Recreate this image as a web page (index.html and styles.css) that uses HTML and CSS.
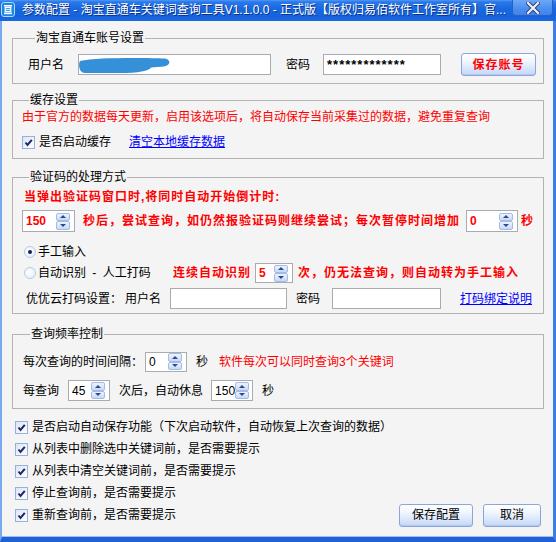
FILE: index.html
```html
<!DOCTYPE html>
<html lang="zh-CN">
<head>
<meta charset="utf-8">
<title>参数配置</title>
<link rel="stylesheet" href="styles.css">
</head>
<body>
<div class="window">
  <div class="titlebar">
    <svg class="app-icon" width="14" height="15" viewBox="0 0 14 15">
      <rect x="0.5" y="0.5" width="13" height="14" rx="2.5" fill="#1c86e6" stroke="#a9dbff"/>
      <rect x="3" y="3" width="8" height="1.6" fill="#fff"/>
      <rect x="3" y="10.6" width="8" height="1.6" fill="#fff"/>
      <rect x="4.2" y="5.6" width="5.6" height="4" fill="none" stroke="#fff" stroke-width="1.2"/>
      <rect x="4.2" y="7.2" width="5.6" height="1" fill="#fff"/>
    </svg>
    <span class="title">参数配置 - 淘宝直通车关键词查询工具V1.1.0.0 - 正式版【版权归易佰软件工作室所有】官...</span>
    <div class="close-btn">
      <svg width="14" height="12" viewBox="0 0 14 12">
        <path d="M2 1 L12 11 M12 1 L2 11" stroke="#2c3f78" stroke-width="4.2" stroke-linecap="square"/>
        <path d="M2 1 L12 11 M12 1 L2 11" stroke="#eef1f7" stroke-width="2.2" stroke-linecap="square"/>
      </svg>
    </div>
  </div>

  <div class="body">
    <fieldset class="group g-account">
      <legend>淘宝直通车账号设置</legend>
      <div class="row account-row">
        <span class="lbl">用户名</span>
        <div class="input input-user">
          <svg class="redact" width="92" height="17" viewBox="0 0 92 17">
            <path d="M1 4 C18 0 70 1 86 1.5 C92 2.5 92 8.5 85 9.5 L72 10.5 C70 14 60 16 40 16 L6 16 C0 16 -1 7 1 4 Z" fill="#3690d8"/>
          </svg>
        </div>
        <span class="lbl lbl-pass">密码</span>
        <div class="input input-pass">*************</div>
        <button class="btn btn-account">保存账号</button>
      </div>
    </fieldset>

    <fieldset class="group g-cache">
      <legend>缓存设置</legend>
      <div class="red-line cache-note">由于官方的数据每天更新，启用该选项后，将自动保存当前采集过的数据，避免重复查询</div>
      <div class="row check-row cache-row">
        <span class="checkbox checked"><svg width="11" height="11" viewBox="0 0 11 11"><path d="M2.5 5.5 L4.5 8 L8.8 2.8" fill="none" stroke="#21246b" stroke-width="2"/></svg></span>
        <span class="check-label">是否启动缓存</span>
        <a class="link clear-link">清空本地缓存数据</a>
      </div>
    </fieldset>

    <fieldset class="group g-captcha">
      <legend>验证码的处理方式</legend>
      <div class="warn-bold captcha-head">当弹出验证码窗口时,将同时自动开始倒计时:</div>
      <div class="row captcha-spin-row">
        <div class="spin spin-red spin-150"><span class="val">150</span><span class="spin-btns"><i class="up"></i><i class="down"></i></span></div>
        <span class="warn-bold retry-text">秒后，尝试查询，如仍然报验证码则继续尝试；每次暂停时间增加</span>
        <div class="spin spin-red spin-add"><span class="val">0</span><span class="spin-btns"><i class="up"></i><i class="down"></i></span></div>
        <span class="warn-bold sec-bold">秒</span>
      </div>
      <div class="row radio-row radio-manual">
        <span class="radio selected"></span>
        <span class="radio-label">手工输入</span>
      </div>
      <div class="row radio-row radio-auto">
        <span class="radio"></span>
        <span class="radio-label auto-label">自动识别 <span class="dash">-</span> 人工打码</span>
        <span class="warn-bold">连续自动识别</span>
        <div class="spin spin-red spin-5"><span class="val">5</span><span class="spin-btns"><i class="up"></i><i class="down"></i></span></div>
        <span class="warn-bold fallback-text">次，仍无法查询，则自动转为手工输入</span>
      </div>
      <div class="row yyy-row">
        <span class="lbl">优优云打码设置：</span>
        <span class="lbl yyy-user">用户名</span>
        <div class="input yyy-input-user"></div>
        <span class="lbl yyy-pass">密码</span>
        <div class="input yyy-input-pass"></div>
        <a class="link yyy-link">打码绑定说明</a>
      </div>
    </fieldset>

    <fieldset class="group g-freq">
      <legend>查询频率控制</legend>
      <div class="row freq-row freq-row1">
        <span class="lbl">每次查询的时间间隔：</span>
        <div class="spin spin-interval"><span class="val">0</span><span class="spin-btns"><i class="up"></i><i class="down"></i></span></div>
        <span class="lbl sec-a">秒</span>
        <span class="red-line freq-note">软件每次可以同时查询3个关键词</span>
      </div>
      <div class="row freq-row freq-row2">
        <span class="lbl">每查询</span>
        <div class="spin spin-count"><span class="val">45</span><span class="spin-btns"><i class="up"></i><i class="down"></i></span></div>
        <span class="lbl rest-label">次后，自动休息</span>
        <div class="spin spin-rest"><span class="val">150</span><span class="spin-btns"><i class="up"></i><i class="down"></i></span></div>
        <span class="lbl sec-b">秒</span>
      </div>
    </fieldset>

    <div class="checklist">
      <div class="row list-row">
        <span class="checkbox checked"><svg width="11" height="11" viewBox="0 0 11 11"><path d="M2.5 5.5 L4.5 8 L8.8 2.8" fill="none" stroke="#21246b" stroke-width="2"/></svg></span>
        <span class="check-label">是否启动自动保存功能（下次启动软件，自动恢复上次查询的数据）</span>
      </div>
      <div class="row list-row">
        <span class="checkbox checked"><svg width="11" height="11" viewBox="0 0 11 11"><path d="M2.5 5.5 L4.5 8 L8.8 2.8" fill="none" stroke="#21246b" stroke-width="2"/></svg></span>
        <span class="check-label">从列表中删除选中关键词前，是否需要提示</span>
      </div>
      <div class="row list-row">
        <span class="checkbox checked"><svg width="11" height="11" viewBox="0 0 11 11"><path d="M2.5 5.5 L4.5 8 L8.8 2.8" fill="none" stroke="#21246b" stroke-width="2"/></svg></span>
        <span class="check-label">从列表中清空关键词前，是否需要提示</span>
      </div>
      <div class="row list-row">
        <span class="checkbox checked"><svg width="11" height="11" viewBox="0 0 11 11"><path d="M2.5 5.5 L4.5 8 L8.8 2.8" fill="none" stroke="#21246b" stroke-width="2"/></svg></span>
        <span class="check-label">停止查询前，是否需要提示</span>
      </div>
      <div class="row list-row last-row">
        <span class="checkbox checked"><svg width="11" height="11" viewBox="0 0 11 11"><path d="M2.5 5.5 L4.5 8 L8.8 2.8" fill="none" stroke="#21246b" stroke-width="2"/></svg></span>
        <span class="check-label">重新查询前，是否需要提示</span>
        <div class="actions">
          <button class="btn btn-save">保存配置</button>
          <button class="btn btn-cancel">取消</button>
        </div>
      </div>
    </div>
  </div>
</div>
</body>
</html>
```

FILE: styles.css
```css
html, body {
  margin: 0;
  padding: 0;
  background: #f4f4f4;
}

.window {
  width: 556px;
  height: 542px;
  display: flex;
  flex-direction: column;
  font: 12px/14px "Liberation Sans", "Noto Sans CJK SC", sans-serif;
  color: #000;
  overflow: hidden;
}

/* ---------- title bar ---------- */
.titlebar {
  height: 21px;
  flex: none;
  display: flex;
  align-items: flex-start;
  background: linear-gradient(#4d98f6 0, #2a78ea 2px, #1767df 45%, #1463dc 80%, #1a69e1 100%);
}

.app-icon {
  margin: 2px 0 0 1px;
  flex: none;
}

.title {
  flex: none;
  margin-left: 7px;
  line-height: 20px;
  color: #fff;
  white-space: nowrap;
  text-shadow: 1px 1px 0 #0b2f86;
}

.close-btn {
  flex: none;
  width: 41px;
  height: 16px;
  margin: 0 3px 0 auto;
  box-sizing: border-box;
  border: 1px solid #2b5fc4;
  border-top: none;
  border-radius: 0 0 4px 4px;
  background: linear-gradient(#6da8f6, #4a8ef0 60%, #3f84ec);
  display: flex;
  align-items: center;
  justify-content: center;
}

/* ---------- body ---------- */
.body {
  flex: 1;
  display: flex;
  flex-direction: column;
  padding: 0 9px 0 10px;
  border-left: 2px solid #78a8ee;
  border-right: 3px solid #3c7de6;
  border-bottom: 5px solid #2160d6;
  box-shadow: inset 0 -1px 0 #9cc0f2;
  background: #f4f4f4;
}

.group {
  margin: 0;
  padding: 0;
  min-width: 0;
  border: 1px solid #b2b2b2;
}

.group legend {
  margin-left: 7px;
  padding: 0 1px;
  height: 14px;
  line-height: 14px;
}

.row {
  display: flex;
  align-items: center;
  white-space: nowrap;
}

.lbl {
  flex: none;
}

.input {
  box-sizing: border-box;
  height: 21px;
  border: 1px solid #a9abb0;
  background: #fff;
  display: flex;
  align-items: center;
  flex: none;
}

.link {
  color: #0000ff;
  text-decoration: underline;
  cursor: pointer;
}

.red-line {
  color: #ff0000;
}

.warn-bold {
  color: #ff0000;
  font-weight: bold;
  letter-spacing: 1px;
}

/* group 1 */
.g-account {
  margin-top: 10px;
  padding: 8px 0 7px 15px;
}

.account-row {
  height: 23px;
}

.input-user {
  margin-left: 14px;
  width: 193px;
  align-items: flex-start;
}

.redact {
  margin-top: 2px;
}

.lbl-pass {
  margin-left: 15px;
}

.input-pass {
  margin-left: 13px;
  width: 118px;
  padding-left: 3px;
  font-size: 13px;
  letter-spacing: 1px;
  font-weight: bold;
}

.btn {
  box-sizing: border-box;
  height: 23px;
  padding: 0;
  font: inherit;
  border: 1px solid #8ea5dc;
  border-radius: 3px;
  background: linear-gradient(#ffffff, #f1f6fe 35%, #d9e6fa 70%, #c3d6f6);
  box-shadow: inset 0 -1px 0 #b3c8ee;
  color: #000;
}

.btn-account {
  margin-left: 20px;
  width: 75px;
  color: #ff0000;
  font-weight: bold;
  letter-spacing: 1px;
}

/* group 2 */
.g-cache {
  margin-top: 9px;
  padding: 3px 0 9px 9px;
}

.cache-note {
  height: 14px;
}

.cache-row {
  margin-top: 11px;
  height: 14px;
}

.checkbox {
  box-sizing: border-box;
  width: 13px;
  height: 13px;
  flex: none;
  border: 1px solid #93b1de;
  background: linear-gradient(135deg, #dbe5f4, #ffffff);
  display: flex;
  align-items: center;
  justify-content: center;
}

.check-label {
  margin-left: 4px;
}

.clear-link {
  margin-left: 18px;
}

/* group 3 */
.g-captcha {
  margin-top: 11px;
  padding: 6px 0 4px 9px;
}

.captcha-head {
  height: 14px;
  padding-left: 2px;
}

.captcha-spin-row {
  margin-top: 6px;
  height: 22px;
}

.spin {
  box-sizing: border-box;
  height: 21px;
  flex: none;
  border: 1px solid #a9abb0;
  background: #fff;
  display: flex;
  align-items: center;
  padding-left: 3px;
}

.spin .val {
  flex: 1;
}

.spin-red .val {
  color: #ff0000;
  font-weight: bold;
}

.spin-btns {
  flex: none;
  width: 14px;
  height: 17px;
  margin-right: 4px;
  display: flex;
  flex-direction: column;
}

.spin-btns i {
  flex: 1;
  box-sizing: border-box;
  border: 1px solid #a3bbe6;
  border-radius: 2px;
  background: linear-gradient(#eef4fd, #c7d9f6);
  display: flex;
  align-items: center;
  justify-content: center;
}

.spin-btns i::before {
  content: "";
  width: 0;
  height: 0;
  border-left: 3px solid transparent;
  border-right: 3px solid transparent;
}

.spin-btns i.up::before {
  border-bottom: 3px solid #2b4a8e;
}

.spin-btns i.down::before {
  border-top: 3px solid #2b4a8e;
}

.spin-150 {
  width: 53px;
  height: 22px;
}

.retry-text {
  margin-left: 8px;
}

.spin-add {
  margin-left: 6px;
  width: 52px;
  height: 22px;
}

.sec-bold {
  margin-left: 3px;
}

.radio-row {
  padding-left: 2px;
}

.radio-manual {
  margin-top: 13px;
  height: 14px;
}

.radio-auto {
  margin-top: 3px;
  height: 22px;
}

.radio {
  box-sizing: border-box;
  width: 12px;
  height: 12px;
  flex: none;
  border-radius: 50%;
  border: 1px solid #b5cbe9;
  background: radial-gradient(circle at 40% 40%, #ffffff, #e0e9f6);
  display: flex;
  align-items: center;
  justify-content: center;
}

.radio.selected::before {
  content: "";
  width: 4px;
  height: 4px;
  border-radius: 50%;
  background: #102060;
}

.radio-label {
  margin-left: 2px;
}

.auto-label {
  width: 135px;
}

.dash {
  margin: 0 3px;
}

.spin-5 {
  margin-left: 4px;
  width: 38px;
  height: 20px;
}

.fallback-text {
  margin-left: 5px;
}

.yyy-row {
  margin-top: 4px;
  height: 21px;
  padding-left: 4px;
}

.yyy-user {
  margin-left: 3px;
}

.yyy-input-user {
  margin-left: 9px;
  width: 117px;
}

.yyy-pass {
  margin-left: 9px;
}

.yyy-input-pass {
  margin-left: 12px;
  width: 109px;
}

.yyy-link {
  margin-left: 19px;
}

/* group 4 */
.g-freq {
  margin-top: 13px;
  padding: 10px 0 7px 10px;
}

.freq-row {
  height: 21px;
}

.freq-row2 {
  margin-top: 8px;
}

.spin-interval {
  margin-left: 2px;
  width: 42px;
  height: 20px;
}

.sec-a {
  margin-left: 9px;
}

.freq-note {
  margin-left: 11px;
}

.spin-count {
  margin-left: 9px;
  width: 42px;
  height: 21px;
}

.rest-label {
  margin-left: 9px;
}

.spin-rest {
  margin-left: 8px;
  width: 42px;
  height: 21px;
}

.sec-b {
  margin-left: 9px;
}

/* check list */
.checklist {
  margin-top: 7px;
  padding-left: 3px;
  display: flex;
  flex-direction: column;
}

.list-row {
  height: 22px;
}

.actions {
  margin-left: auto;
  margin-right: 3px;
  display: flex;
  gap: 10px;
}

.btn-save {
  width: 74px;
  height: 23px;
}

.btn-cancel {
  width: 58px;
  height: 23px;
}
```
